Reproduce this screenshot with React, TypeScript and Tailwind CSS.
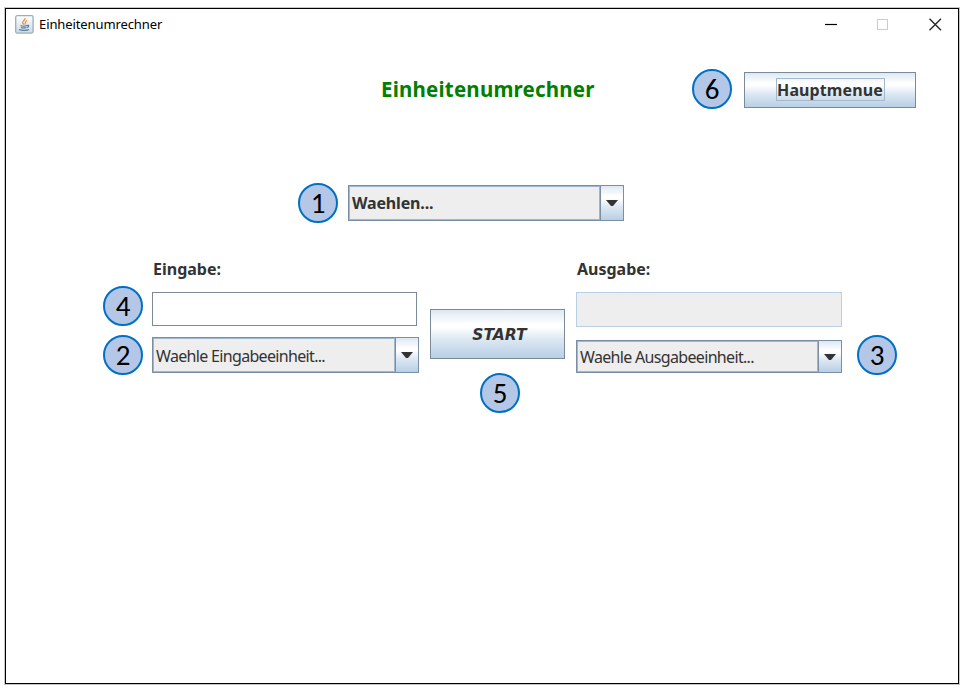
import React from "react";

function Marker({ n, className = "" }: { n: number; className?: string }) {
  return (
    <div className={`flex h-10 w-10 shrink-0 items-center justify-center rounded-full border-2 border-[#0070c4] bg-[#b4c7e7] font-['Carlito','Open_Sans',sans-serif] text-[29px] leading-none text-black ${className}`}>
      <span className="block">{n}</span>
    </div>
  );
}

const metal = "bg-[linear-gradient(to_bottom,#dde8f3_0%,#ffffff_30%,#ffffff_36%,#dce7f2_62%,#b8cfe5_100%)]";

function Combo({ label, className, textClass }: { label: string; className: string; textClass: string }) {
  return (
    <div className={`flex border border-[#7a8fa3] bg-[#eeeeee] ${className}`}>
      <div className="flex flex-1 items-center border border-[#9fb7ce] whitespace-nowrap">
        <span className={`text-[#333333] ${textClass}`}>{label}</span>
      </div>
      <div className={`flex w-[23px] items-center justify-center border-l border-[#7a8fa3] ${metal}`}>
        <svg width="12" height="6" viewBox="0 0 12 6"><path d="M0 0H12L7 6H5Z" fill="#333" /></svg>
      </div>
    </div>
  );
}

function JavaIcon() {
  return (
    <svg width="19" height="19" viewBox="0 0 19 19" fill="none">
      <defs>
        <linearGradient id="cup" x2="0" y2="1">
          <stop stopColor="#fff" /><stop offset="1" stopColor="#cbd9e3" />
        </linearGradient>
      </defs>
      <rect x=".7" y=".7" width="17.4" height="17.4" rx="1.5" fill="url(#cup)" stroke="#9aaebd" strokeWidth="1.3" />
      <path d="M9.800 3C11 5 7 5.800 7.700 8C8 9 9 9.300 8.800 10M12 5.500C9.500 6.500 11 8 10 9.500" stroke="#ee9345" strokeWidth="1.300" />
      <path d="M5.500 10.500C7 11.300 10 11.300 12 10.500M6 12.500C8 13.200 10 13.100 11.500 12.500M4 14.500C7 15.700 12 15.500 14 14.500M12 10.500C14.500 9.700 14 12 12 12.500" stroke="#527b9d" strokeWidth="1.200" />
    </svg>
  );
}

export default function App() {
  return (
    <div className="h-[692px] w-[966px] bg-white pt-2 pl-[5px] font-['Noto_Sans',sans-serif] text-[#333333]">
      <div className="h-[676px] w-[954px] border border-black bg-white shadow-[0_0_0_1px_#c8c8c8]">
        <div className="flex h-[31px] items-center pl-[9px] pr-[15px]">
          <JavaIcon />
          <span className="ml-[5px] text-[13px] leading-none tracking-[-0.1px] text-black">Einheitenumrechner</span>
          <svg className="ml-auto" width="118" height="13" viewBox="0 0 118 13" fill="none">
            <path d="M0 6.500H12" stroke="#000" strokeWidth="1.200" />
            <rect x="52.500" y="1.500" width="10" height="10" stroke="#ccc" />
            <path d="M104.500 .8L116 12.300M116 .8L104.500 12.300" stroke="#222" strokeWidth="1.300" />
          </svg>
        </div>

        <div className="mt-[29px] flex h-10 items-center pl-[375px]">
          <h1 className="w-[311px] text-[20.5px] leading-none font-bold tracking-[0.2px] whitespace-nowrap text-[#008000]">Einheitenumrechner</h1>
          <Marker n={6} />
          <button className={`mt-px ml-[12px] flex h-9 w-[172px] items-center justify-center border border-[#7a8a99] ${metal}`}>
            <span className="flex h-[23px] w-[109px] items-center justify-center border border-[#a3b8cc] text-[16px] leading-none font-bold tracking-[0.1px]">Hauptmenue</span>
          </button>
        </div>

        <div className="mt-[74px] flex items-center pl-[292px]">
          <Marker n={1} />
          <Combo label="Waehlen..." className="ml-[10px] h-9 w-[276px]" textClass="pl-[2px] text-[16px] font-bold tracking-[-0.15px]" />
        </div>

        <div className="mt-[36px] flex pl-[97px]">
          <div className="flex w-[49px] flex-col pt-[27px]">
            <Marker n={4} />
            <Marker n={2} className="mt-[9px]" />
          </div>
          <div className="w-[267px]">
            <div className="h-[33px] pt-[2px] pl-px text-[16px] leading-[16px] font-bold">Eingabe:</div>
            <div className="h-[34px] w-[265px] border border-[#7a8a99] bg-white" />
            <Combo label="Waehle Eingabeeinheit..." className="mt-[11px] h-9 w-[267px]" textClass="pt-px pl-[2px] text-[16px] tracking-[-0.67px]" />
          </div>
          <div className="ml-[11px] flex w-[135px] flex-col items-center pt-[50px]">
            <button className={`h-[50px] w-full border border-[#7a8a99] pt-[3px] pl-[4px] font-['DejaVu_Sans',sans-serif] text-[15.5px] leading-none font-bold italic ${metal}`}>START</button>
            <Marker n={5} className="mt-[14px] ml-[5px]" />
          </div>
          <div className="ml-[11px] w-[267px]">
            <div className="h-[33px] pt-[2px] pl-px text-[16px] leading-[16px] font-bold">Ausgabe:</div>
            <div className="h-[35px] w-[266px] border border-[#b8cfe5] bg-[#eeeeee]" />
            <Combo label="Waehle Ausgabeeinheit..." className="mt-[13px] h-[33px] w-[266px]" textClass="pl-[2px] text-[16px] tracking-[-0.67px]" />
          </div>
          <Marker n={3} className="mt-[76px] ml-[14px]" />
        </div>
      </div>
    </div>
  );
}
